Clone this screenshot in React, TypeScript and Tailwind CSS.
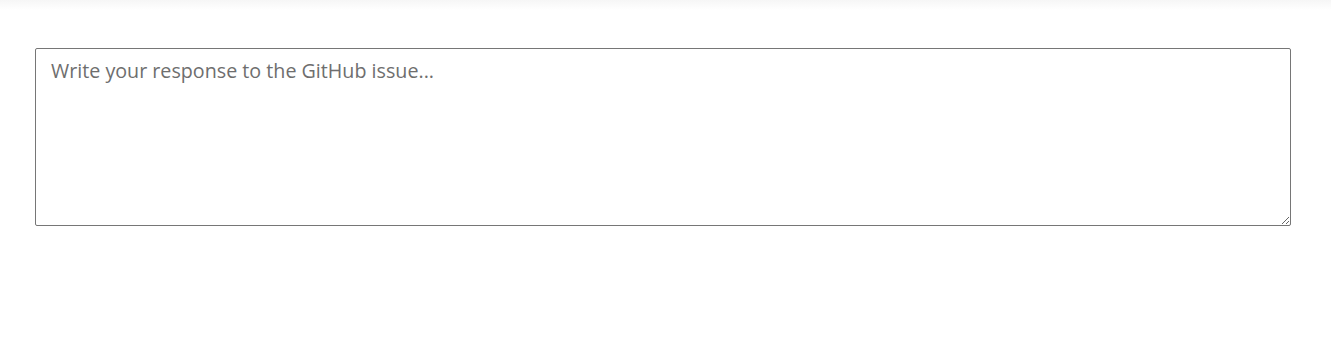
import React from "react";

export default function App() {
  return (
    <div className="w-[1331px] h-[351px] bg-white relative" style={{ fontFamily: '"Open Sans", "Noto Sans", sans-serif' }}>
      <div className="h-[10px] bg-gradient-to-b from-[#f6f6f6] to-white" />
      <div className="pt-[38px] pl-[35px]">
        <textarea
          className="block w-[1256px] h-[178px] border border-[#767676] rounded-[2px] px-[15px] pt-[8px] pb-[8px] text-[19.7px] leading-[27px] text-[#333] placeholder:text-[#6e6e6e] bg-white outline-none"
          style={{ fontFamily: '"Open Sans", "Noto Sans", sans-serif' }}
          placeholder="Write your response to the GitHub issue..."
        />
      </div>
    </div>
  );
}
